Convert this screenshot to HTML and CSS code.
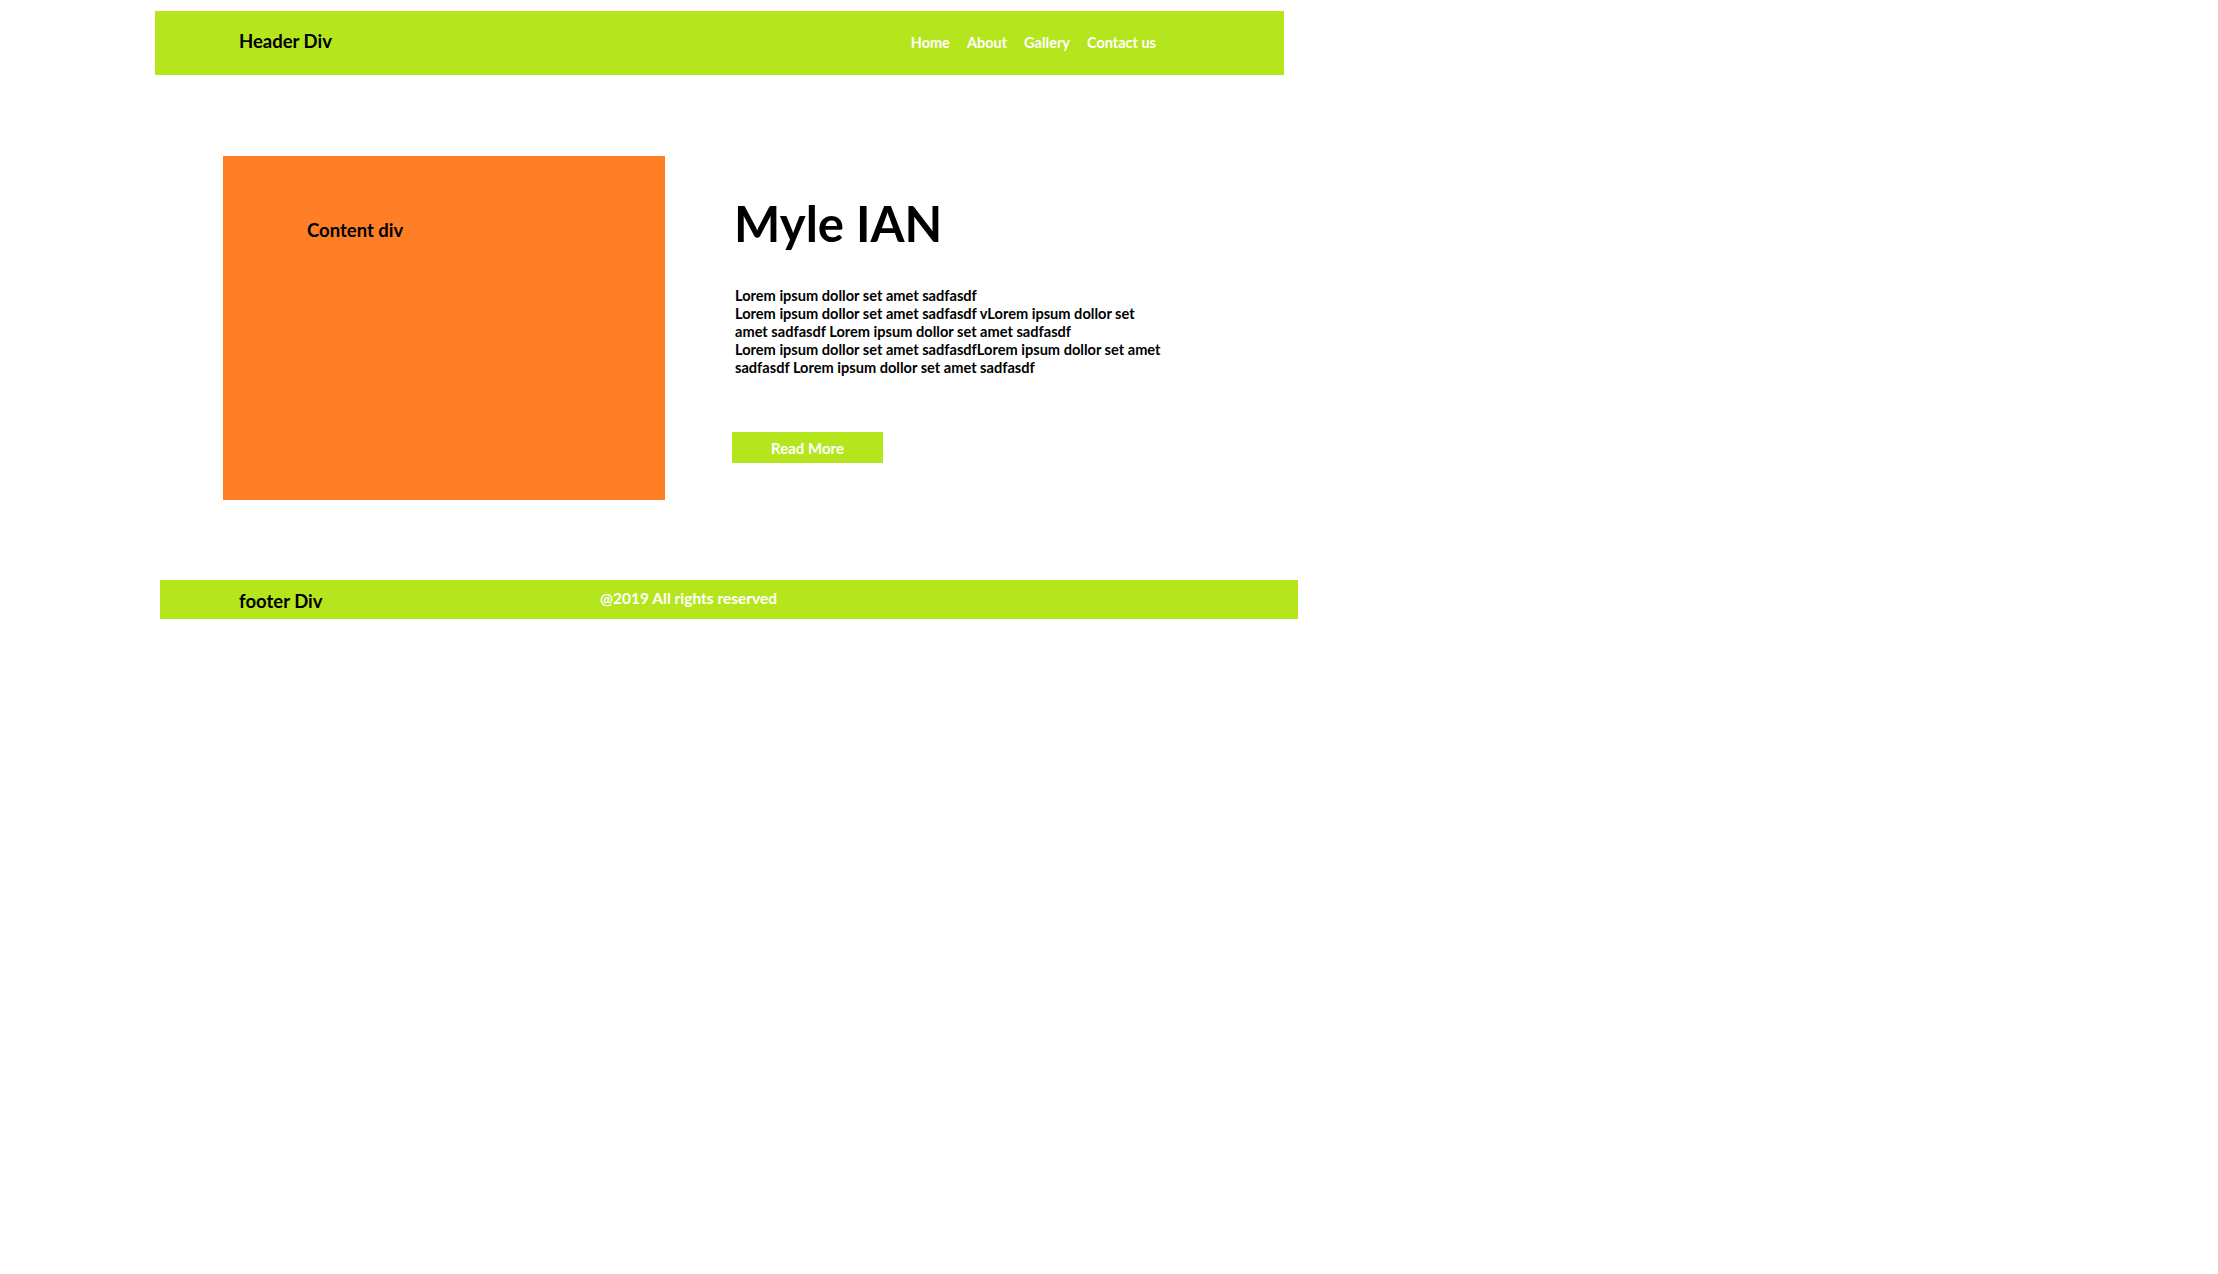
FILE: index.html
```html
<!DOCTYPE html>
<html lang="en">
<head>
<meta charset="utf-8">
<title>Myle IAN</title>
<link rel="stylesheet" href="styles.css">
</head>
<body>
<header class="site-header">
  <div class="brand">Header Div</div>
  <nav class="nav">
    <a href="#" class="nav-link">Home</a>
    <a href="#" class="nav-link">About</a>
    <a href="#" class="nav-link">Gallery</a>
    <a href="#" class="nav-link">Contact us</a>
  </nav>
</header>

<main class="content">
  <div class="content-box">
    <div class="content-label">Content div</div>
  </div>
  <section class="intro">
    <h1 class="intro-title">Myle IAN</h1>
    <div class="intro-text">
      <p class="line">Lorem ipsum dollor set amet sadfasdf</p>
      <p class="line">Lorem ipsum dollor set amet sadfasdf vLorem ipsum dollor set amet sadfasdf Lorem ipsum dollor set amet sadfasdf</p>
      <p class="line">Lorem ipsum dollor set amet sadfasdfLorem ipsum dollor set amet sadfasdf Lorem ipsum dollor set amet sadfasdf</p>
    </div>
    <a href="#" class="btn">Read More</a>
  </section>
</main>

<footer class="site-footer">
  <div class="footer-brand">footer Div</div>
  <div class="copyright">@2019 All rights reserved</div>
</footer>
</body>
</html>
```

FILE: styles.css
```css
html, body {
  margin: 0;
  padding: 0;
  background: #ffffff;
}

body {
  font-family: Lato, "Open Sans", "Liberation Sans", sans-serif;
  font-weight: 700;
  color: #000000;
}

.site-header {
  margin: 11px 0 0 155px;
  width: 1129px;
  height: 64px;
  background: #b5e61d;
  display: flex;
  align-items: flex-start;
  box-sizing: border-box;
}

.brand {
  padding: 19px 0 0 84px;
  font-size: 18.5px;
  line-height: 22px;
}

.nav {
  margin-left: auto;
  padding: 23px 128px 0 0;
  display: flex;
  gap: 17px;
}

.nav-link {
  color: #ffffff;
  text-decoration: none;
  font-size: 14.5px;
  line-height: 18px;
}

.content {
  margin: 81px 0 0 223px;
  display: flex;
  align-items: flex-start;
}

.content-box {
  width: 442px;
  height: 344px;
  background: #ff7f27;
  box-sizing: border-box;
  padding: 63px 0 0 84px;
}

.content-label {
  font-size: 18.5px;
  line-height: 22px;
}

.intro {
  margin-left: 70px;
  display: flex;
  flex-direction: column;
  align-items: flex-start;
}

.intro-title {
  margin: 37px 0 0 -1px;
  font-size: 49px;
  line-height: 60px;
  font-weight: 700;
}

.intro-text {
  margin-top: 34px;
  width: 432px;
}

.line {
  margin: 0;
  font-size: 14.6px;
  line-height: 18px;
}

.btn {
  margin-top: 55px;
  margin-left: -3px;
  width: 151px;
  height: 31px;
  background: #b5e61d;
  color: #ffffff;
  text-decoration: none;
  font-size: 15px;
  display: flex;
  align-items: center;
  justify-content: center;
}

.site-footer {
  margin: 80px 0 0 160px;
  width: 1138px;
  height: 39px;
  background: #b5e61d;
  display: flex;
  align-items: flex-start;
  padding-top: 10px;
  box-sizing: border-box;
}

.footer-brand {
  width: 361px;
  padding-left: 79px;
  font-size: 18.5px;
  line-height: 22px;
}

.copyright {
  color: #ffffff;
  font-size: 15.5px;
  line-height: 18px;
  margin-top: -1px;
}
```
